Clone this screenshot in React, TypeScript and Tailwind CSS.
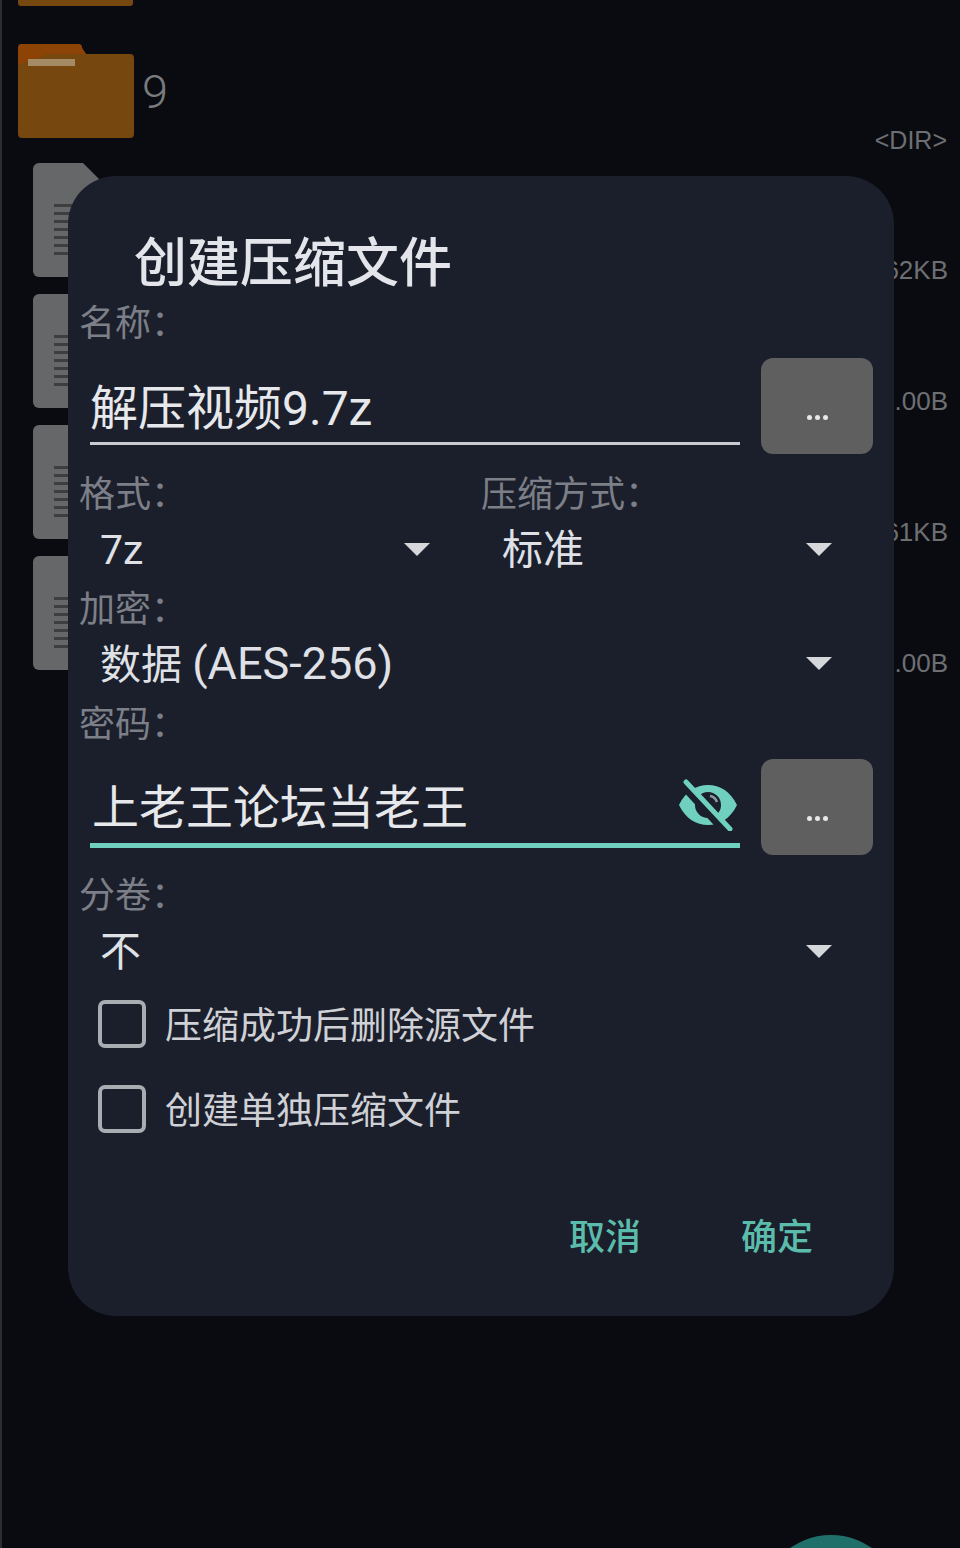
import React from "react";

const font = { fontFamily: '"Roboto", "Noto Sans CJK SC", "Noto Sans", sans-serif' };
const listFont = { fontFamily: '"Liberation Sans", sans-serif' };

function Caret() {
  return <div className="w-0 h-0 border-l-[13px] border-r-[13px] border-t-[13px] border-l-transparent border-r-transparent border-t-[#d5d7db]" />;
}

function Label({ children, className = "" }: { children: React.ReactNode; className?: string }) {
  return <div className={`text-[36px] leading-[40px] text-[#7c7f87] -ml-[1px] ${className}`}>{children}</div>;
}

function Select({ value, caretClass, className = "" }: { value: React.ReactNode; caretClass: string; className?: string }) {
  return (
    <div className={`flex items-center h-[74px] pl-[20px] ${className}`}>
      <span className="text-[41px] leading-[50px] text-[#dfe1e6] whitespace-nowrap">{value}</span>
      <div className={`ml-auto pb-[2px] ${caretClass}`}><Caret /></div>
    </div>
  );
}

function DotsButton() {
  return (
    <div className="w-[112px] h-[96px] rounded-[12px] bg-[#5f5f60] shrink-0 flex items-center justify-center gap-[3px] pt-[22px]">
      <span className="w-[5px] h-[5px] rounded-full bg-[#e8e8e8]" />
      <span className="w-[5px] h-[5px] rounded-full bg-[#e8e8e8]" />
      <span className="w-[5px] h-[5px] rounded-full bg-[#e8e8e8]" />
    </div>
  );
}

function Check({ label }: { label: string }) {
  return (
    <div className="flex items-center h-[85px] pl-[18px] gap-[19px]">
      <div className="w-[48px] h-[48px] rounded-[7px] border-[4px] border-[#a9acb1]" />
      <span className="text-[37px] leading-[48px] pt-[6px] text-[#cfd1d6]">{label}</span>
    </div>
  );
}

function FileIcon() {
  return (
    <svg width="72" height="114" viewBox="0 0 72 114" className="block shrink-0">
      <path d="M6 0H50L72 22V108a6 6 0 0 1-6 6H6a6 6 0 0 1-6-6V6a6 6 0 0 1 6-6Z" fill="#666769" />
      {[41, 49, 57, 65, 73, 81, 89].map((y) => (
        <rect key={y} x="21" y={y} width="34" height="3" fill="#3d3e40" />
      ))}
    </svg>
  );
}

function FileRow({ size }: { size: string }) {
  return (
    <div className="flex items-start h-[131px] pl-[31px] pr-[12px]">
      <FileIcon />
      <span className="ml-auto mt-[89px] text-[26px] leading-[36px] text-[#6d6f73]" style={listFont}>{size}</span>
    </div>
  );
}

export default function App() {
  return (
    <div className="relative w-[960px] h-[1548px] overflow-hidden bg-[#0a0b10] border-l-[2px] border-l-[#2c2d30]" style={font}>
      <div className="h-[6px] w-[115px] ml-[16px] bg-[#76480f] rounded-b-[3px]" />
      <div className="flex items-start h-[157px] pt-[38px] pl-[16px] pr-[13px]">
        <svg width="116" height="94" viewBox="0 0 116 94" className="block shrink-0">
          <path d="M4 0H60a4 4 0 0 1 4 4L68 10H112a4 4 0 0 1 4 4V90a4 4 0 0 1-4 4H4a4 4 0 0 1-4-4V4a4 4 0 0 1 4-4Z" fill="#76480f" />
          <path d="M4 0H60a4 4 0 0 1 4 4L68 10H30L3 20H0V4a4 4 0 0 1 4-4Z" fill="#8c4305" />
          <rect x="10" y="15" width="47" height="7" fill="#a58a66" />
        </svg>
        <span className="ml-[8px] mt-[20px] text-[47px] leading-[56px] font-light text-[#7a7b7e]">9</span>
        <span className="ml-auto mt-[78px] text-[25px] leading-[36px] text-[#6d6f73]" style={listFont}>&lt;DIR&gt;</span>
      </div>
      <div className="flex flex-col">
        <FileRow size="862KB" />
        <FileRow size="0.00B" />
        <FileRow size="561KB" />
        <FileRow size="0.00B" />
      </div>

      <div className="absolute left-[66px] top-[176px] w-[826px] h-[1140px] rounded-[48px] bg-[#1b1f2b] pl-[12px] pr-[21px] flex flex-col">
        <div className="pl-[54px] pt-[54px] text-[53px] leading-[68px] font-medium text-[#e3e5ea] h-[128px]">创建压缩文件</div>
        <Label>名称：</Label>

        <div className="flex gap-[21px] mt-[14px] items-start">
          <div className="flex-1 ml-[10px] h-[87px] border-b-[3px] border-b-[#c9cbd0] flex items-center pt-[18px]">
            <span className="text-[48px] leading-[60px] text-[#e6e8ec]">解压视频9.7z</span>
          </div>
          <DotsButton />
        </div>

        <div className="flex mt-[21px]">
          <div className="w-[402px]">
            <Label>格式：</Label>
            <Select value="7z" caretClass="mr-[52px]" className="-mt-[2px]" />
          </div>
          <div className="flex-1">
            <Label>压缩方式：</Label>
            <Select value="标准" caretClass="mr-[41px]" className="-mt-[2px]" />
          </div>
        </div>

        <Label className="mt-[3px]">加密：</Label>
        <Select
          value={<>数据 <span className="text-[45px]">(AES-256)</span></>}
          caretClass="mr-[41px]"
          className="-mt-[3px]"
        />
        <Label className="mt-[4px]">密码：</Label>

        <div className="flex gap-[21px] mt-[14px] items-start">
          <div className="relative flex-1 ml-[10px] h-[89px] border-b-[5px] border-b-[#6fd0bf] flex items-center pt-[14px]">
            <span className="ml-[2px] text-[47px] leading-[60px] text-[#e6e8ec]">上老王论坛当老王</span>
            <svg width="60" height="52" viewBox="0 0 60 52" className="absolute right-[2px] top-[20px]">
              <path fillRule="evenodd" d="M1 26C8 12 18 6 30 6s22 6 29 20c-7 14-17 20-29 20S8 40 1 26ZM30 13a13 13 0 1 0 0 26 13 13 0 0 0 0-26Z" fill="#6fd0bf" />
              <path d="M32 17a9 9 0 0 1 7 6" stroke="#8f9aa0" strokeWidth="2.5" fill="none" />
              <path d="M4 6 46 52" stroke="#1b1f2b" strokeWidth="7" />
              <path d="M8 3 52 50" stroke="#6fd0bf" strokeWidth="5" strokeLinecap="round" />
            </svg>
          </div>
          <DotsButton />
        </div>

        <Label className="mt-[21px]">分卷：</Label>
        <Select value="不" caretClass="mr-[41px]" className="-mt-[1px] -mb-[8px]" />
        <Check label="压缩成功后删除源文件" />
        <Check label="创建单独压缩文件" />

        <div className="flex justify-end gap-[100px] pr-[60px] mt-[63px]">
          <span className="text-[36px] leading-[48px] font-medium text-[#5cbcab]">取消</span>
          <span className="text-[36px] leading-[48px] font-medium text-[#5cbcab]">确定</span>
        </div>
      </div>

      <div className="absolute left-[758px] top-[1535px] w-[142px] h-[142px] rounded-full bg-[#1f6f6a]" />
    </div>
  );
}
